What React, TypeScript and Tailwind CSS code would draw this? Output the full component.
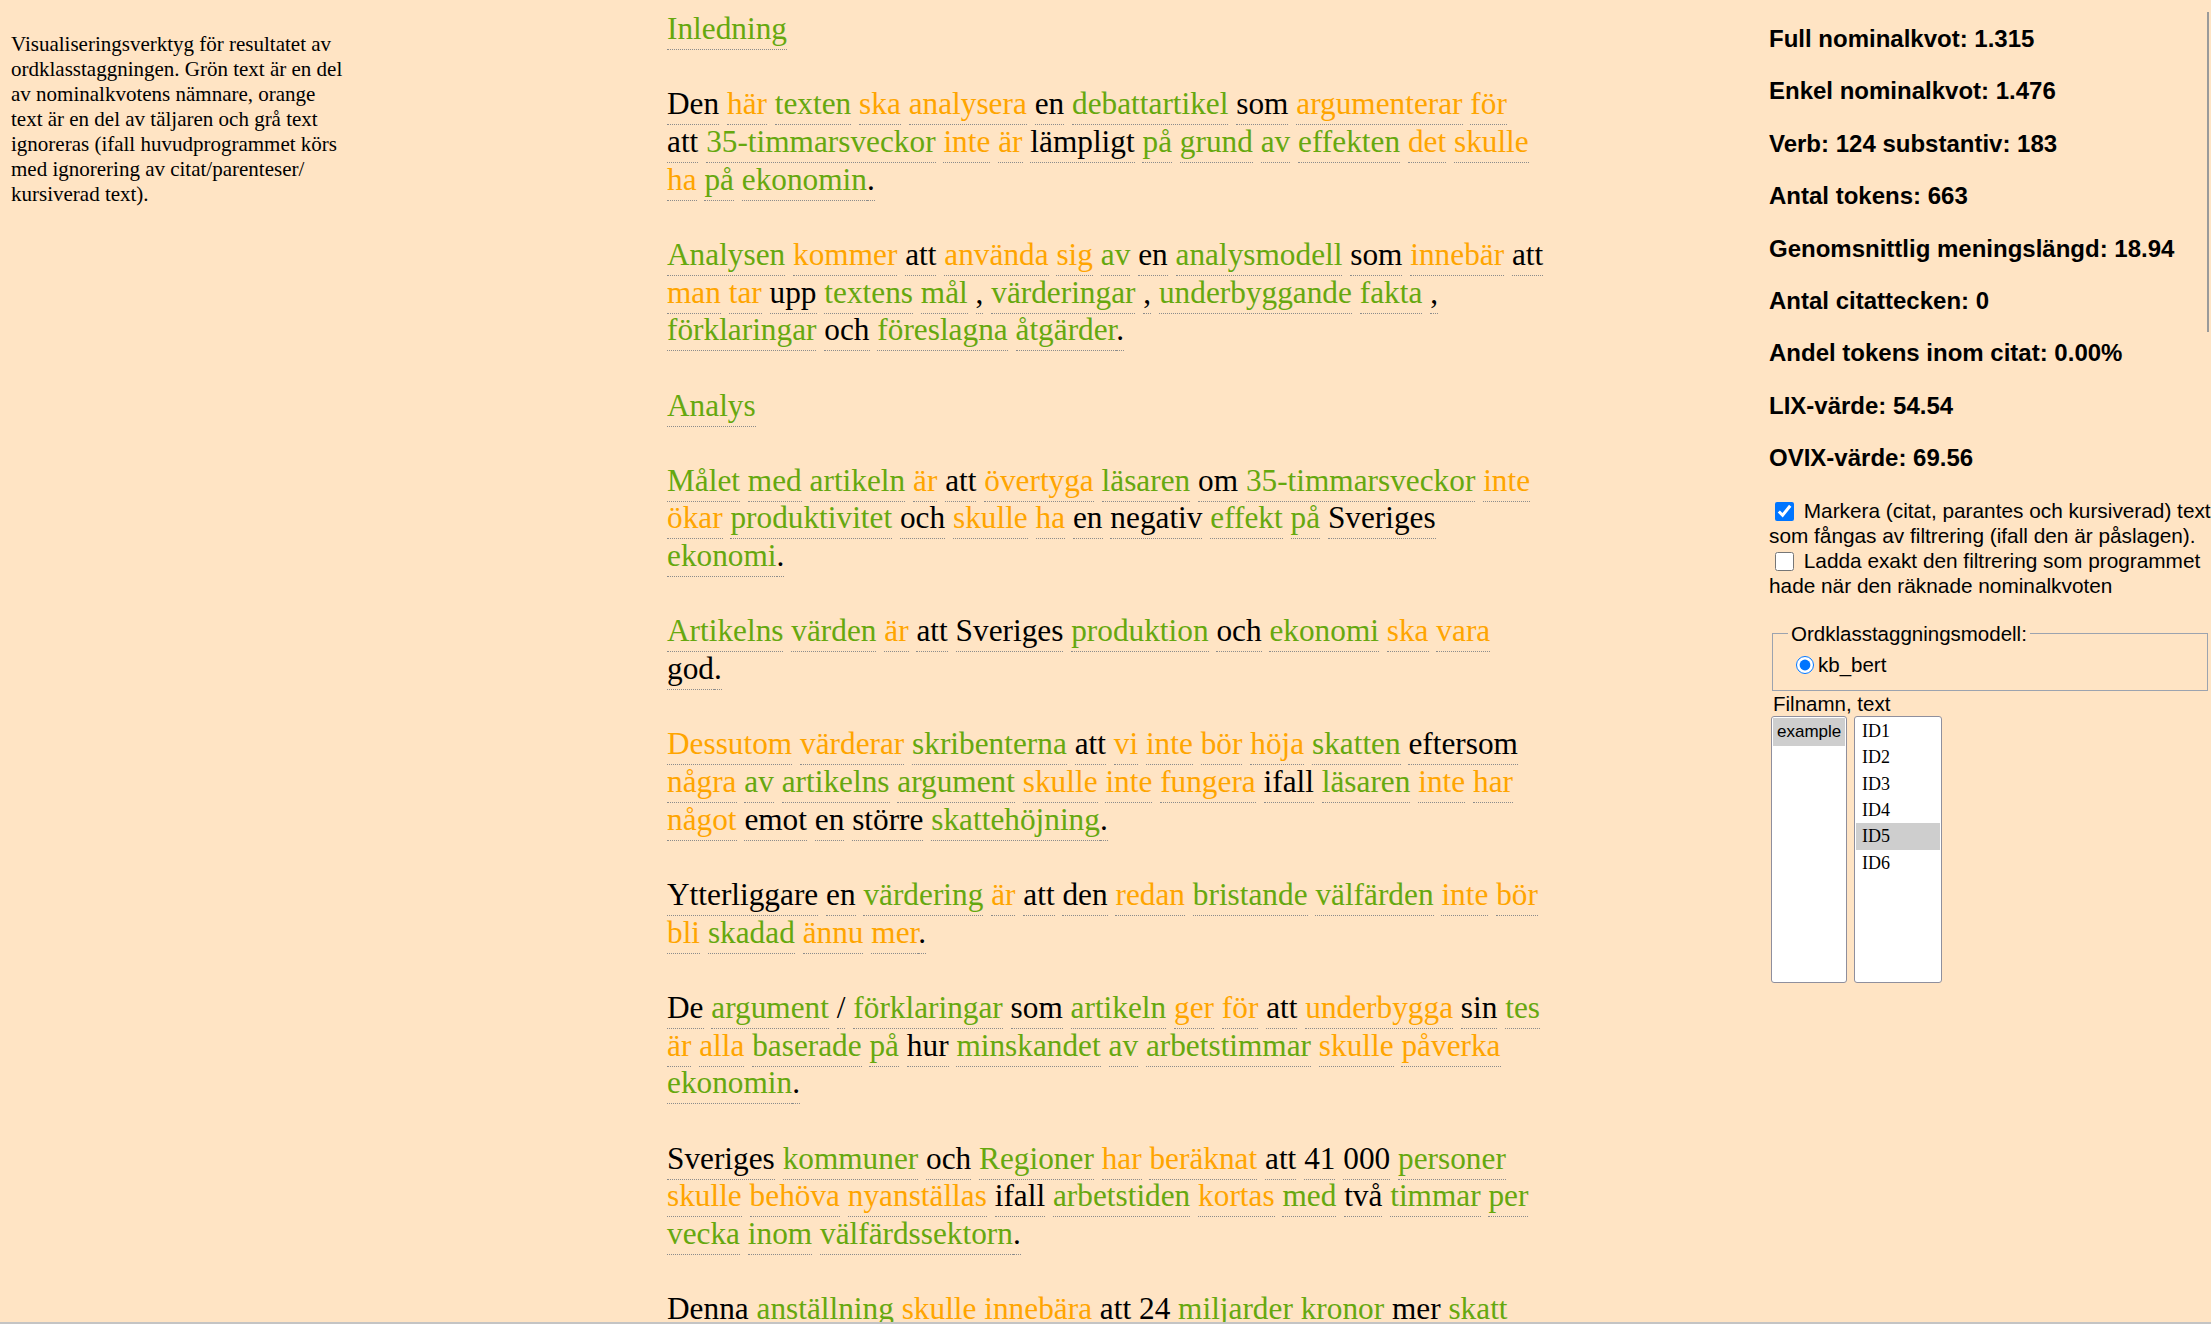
import { Fragment } from "react";

type Tok = { w: string; c: string; join: boolean };

const colors: Record<string, string> = {
  g: "text-[#66a80f]",
  o: "text-[#ffa500]",
  b: "text-black",
};

function parse(s: string): Tok[] {
  return s.split(" ").map((t) => {
    const join = t.startsWith("^");
    const raw = join ? t.slice(1) : t;
    const i = raw.lastIndexOf(":");
    return { w: raw.slice(0, i), c: raw.slice(i + 1), join };
  });
}

const paragraphs = [
  "Inledning:g",
  "Den:b här:o texten:g ska:o analysera:o en:b debattartikel:g som:b argumenterar:o för:o att:b 35-timmarsveckor:g inte:o är:o lämpligt:b på:g grund:g av:g effekten:g det:o skulle:o ha:o på:g ekonomin:g ^.:b",
  "Analysen:g kommer:o att:b använda:o sig:o av:g en:b analysmodell:g som:b innebär:o att:b man:o tar:o upp:b textens:g mål:g ,:b värderingar:g ,:b underbyggande:g fakta:g ,:b förklaringar:g och:b föreslagna:g åtgärder:g ^.:b",
  "Analys:g",
  "Målet:g med:g artikeln:g är:o att:b övertyga:o läsaren:g om:b 35-timmarsveckor:g inte:o ökar:o produktivitet:g och:b skulle:o ha:o en:b negativ:b effekt:g på:g Sveriges:b ekonomi:g ^.:b",
  "Artikelns:g värden:g är:o att:b Sveriges:b produktion:g och:b ekonomi:g ska:o vara:o god:b ^.:b",
  "Dessutom:o värderar:o skribenterna:g att:b vi:o inte:o bör:o höja:o skatten:g eftersom:b några:o av:g artikelns:g argument:g skulle:o inte:o fungera:o ifall:b läsaren:g inte:o har:o något:o emot:b en:b större:b skattehöjning:g ^.:b",
  "Ytterliggare:b en:b värdering:g är:o att:b den:b redan:o bristande:g välfärden:g inte:o bör:o bli:o skadad:g ännu:o mer:o ^.:b",
  "De:b argument:g /:b förklaringar:g som:b artikeln:g ger:o för:o att:b underbygga:o sin:b tes:g är:o alla:o baserade:g på:g hur:b minskandet:g av:g arbetstimmar:g skulle:o påverka:o ekonomin:g ^.:b",
  "Sveriges:b kommuner:g och:b Regioner:g har:o beräknat:o att:b 41:b 000:b personer:g skulle:o behöva:o nyanställas:o ifall:b arbetstiden:g kortas:o med:g två:b timmar:g per:g vecka:g inom:g välfärdssektorn:g ^.:b",
  "Denna:b anställning:g skulle:o innebära:o att:b 24:b miljarder:g kronor:g mer:b skatt:g behöver:o tas:o in:g varje:b år:g ^.:b",
];

const stats = [
  "Full nominalkvot: 1.315",
  "Enkel nominalkvot: 1.476",
  "Verb: 124 substantiv: 183",
  "Antal tokens: 663",
  "Genomsnittlig meningslängd: 18.94",
  "Antal citattecken: 0",
  "Andel tokens inom citat: 0.00%",
  "LIX-värde: 54.54",
  "OVIX-värde: 69.56",
];

function Para({ text }: { text: string }) {
  const toks = parse(text);
  return (
    <p>
      {toks.map((t, i) => (
        <Fragment key={i}>
          {i > 0 && !t.join ? " " : null}
          <span
            className={`border-b border-dotted border-[#8c8c8c] pb-[3px] ${colors[t.c]}`}
          >
            {t.w}
          </span>
        </Fragment>
      ))}
    </p>
  );
}

export default function App() {
  return (
    <div className="relative flex h-[1324px] w-full overflow-hidden bg-[#ffe4c4] text-black">
      {/* info */}
      <div className="ml-[11px] w-[334px] shrink-0 pt-[32px] font-['Liberation_Serif',serif] text-[21px] leading-[25px]">
        Visualiseringsverktyg för resultatet av ordklasstaggningen. Grön text
        är en del av nominalkvotens nämnare, orange text är en del av täljaren
        och grå text ignoreras (ifall huvudprogrammet körs med ignorering av
        citat/parenteser/
        <wbr />
        kursiverad text).
      </div>

      {/* tagged text */}
      <div className="ml-[322px] flex w-[877px] shrink-0 flex-col gap-[37.65px] pt-[10px] font-['Liberation_Serif',serif] text-[31.3px] leading-[37.65px]">
        {paragraphs.map((p, i) => (
          <Para key={i} text={p} />
        ))}
      </div>

      {/* stats + controls */}
      <div className="ml-[225px] w-[442px] shrink-0 pt-[25px] font-['Liberation_Sans',Arial,sans-serif]">
        <div className="flex flex-col gap-[24.4px] text-[24px] font-bold leading-[28px]">
          {stats.map((s) => (
            <p key={s}>{s}</p>
          ))}
        </div>

        <div className="mt-[26px] text-[20.8px] leading-[25px]">
          <input
            type="checkbox"
            defaultChecked
            className="mr-[4px] ml-[6px] h-[19px] w-[19px] align-[-3px]"
          />{" "}
          Markera (citat, parantes och kursiverad) text som fångas av filtrering
          (ifall den är påslagen).
          <br />
          <input
            type="checkbox"
            className="mr-[4px] ml-[6px] h-[19px] w-[19px] align-[-3px]"
          />{" "}
          Ladda exakt den filtrering som programmet hade när den räknade
          nominalkvoten
        </div>

        <fieldset className="mx-[3px] mt-[23px] border border-[#9ca3af] px-[15px] pt-[6px] pb-[13px] text-[20.5px] leading-[25px]">
          <legend className="px-[3px]">Ordklasstaggningsmodell:</legend>
          <label className="flex items-center">
            <input
              type="radio"
              defaultChecked
              name="model"
              className="mr-[4px] ml-[8px] h-[18px] w-[18px]"
            />
            kb_bert
          </label>
        </fieldset>

        <div className="ml-[4px] text-[20.5px] leading-[25px]">Filnamn, text</div>

        <div className="ml-[2px] flex gap-[7px]">
          <div className="h-[267px] w-[76px] rounded-[3px] border border-[#8f8f9d] bg-white p-px">
            <div className="bg-[#cecece] px-[4px] font-['Liberation_Sans',Arial,sans-serif] text-[17px] leading-[28px]">
              example
            </div>
          </div>
          <div className="h-[267px] w-[88px] rounded-[3px] border border-[#8f8f9d] bg-white p-px font-['Liberation_Serif',serif] text-[18px] leading-[26.3px]">
            {["ID1", "ID2", "ID3", "ID4", "ID5", "ID6"].map((id) => (
              <div
                key={id}
                className={`px-[6px] ${id === "ID5" ? "bg-[#cecece]" : ""}`}
              >
                {id}
              </div>
            ))}
          </div>
        </div>
      </div>

      {/* scrollbar thumb + window edge */}
      <div className="absolute top-[12px] right-[2px] h-[320px] w-[2px] bg-[#9a9a9a]" />
      <div className="absolute right-0 bottom-0 left-0 h-[2px] bg-[#c4c4c4]" />
    </div>
  );
}
